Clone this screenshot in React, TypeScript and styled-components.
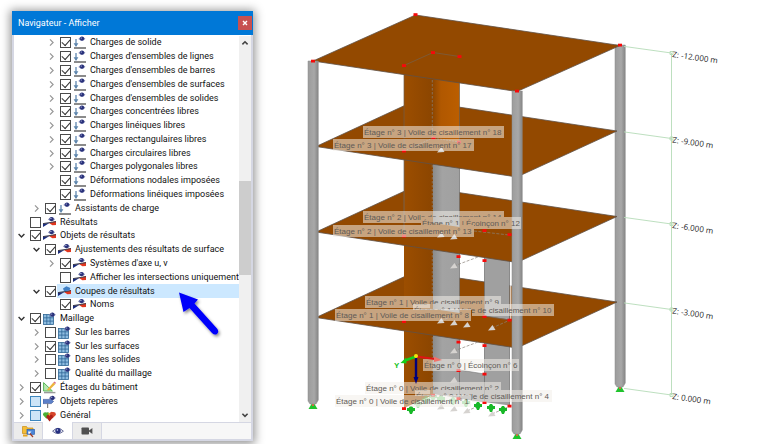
import React from "react";
import styled, { createGlobalStyle } from "styled-components";

const GlobalStyle = createGlobalStyle`
  * { box-sizing: border-box; }
  body { margin: 0; background: #fff; color: #111; font-family: Roboto, "Open Sans", sans-serif; }
  button { font: inherit; padding: 0; border: 0; background: none; color: inherit; }
`;

const Page = styled.div`
  position: relative;
  display: flex;
  align-items: flex-start;
  min-height: 100vh;
`;

const Panel = styled.aside`
  display: flex;
  flex-direction: column;
  flex: 0 0 241px;
  width: 241px;
  min-width: 0;
  min-height: calc(100vh - 14px);
  margin: 11px 7px 3px 12px;
  background: #fff;
  border: solid #d5d7e3;
  border-width: 0 2px 2px;
  box-shadow: 0 1px 9px 2px rgba(0, 0, 0, 0.42);
`;

const TitleBar = styled.header`
  display: flex;
  align-items: center;
  justify-content: space-between;
  height: 24px;
  margin: 0 -2px;
  padding: 0 1px 0 6px;
  background: #0078d7;
  color: #fff;
`;

const Title = styled.h1`
  margin: 0;
  font-size: 9px;
  font-weight: 400;
  line-height: 14px;
`;

const CloseButton = styled.button`
  width: 14px;
  height: 14px;
  background: #c75050;
  display: grid;
  place-items: center;
`;

const Body = styled.div`
  display: flex;
  flex: 1;
  padding-top: 1px;
`;

const Tree = styled.ul`
  flex: 1;
  min-width: 0;
  display: grid;
  grid-template-columns: minmax(0, 1fr);
  grid-auto-rows: 1fr;
  margin: 0;
  padding: 0;
  list-style: none;
  overflow: hidden;
`;

const Row = styled.li<{ $level: number }>`
  display: flex;
  align-items: center;
  padding-left: ${(p) => 1 + p.$level * 15}px;
  min-height: 13px;
`;

const Expander = styled.button`
  width: 12px;
  height: 12px;
  margin-right: 3px;
  display: grid;
  place-items: center;
`;

const ExpanderGap = styled.span`
  width: 15px;
`;

const Check = styled.input<{ $partial?: boolean }>`
  appearance: none;
  flex: none;
  position: relative;
  width: 11px;
  height: 11px;
  margin: 0 1px 0 0;
  border: 1px solid ${(p) => (p.$partial ? "#3d86bd" : "#4a4a4a")};
  background: ${(p) => (p.$partial ? "#cce4f7" : "#fff")};

  &:checked::after {
    content: "";
    position: absolute;
    left: 1px;
    top: 1px;
    width: 7px;
    height: 4px;
    border: solid #333;
    border-width: 0 0 1px 1px;
    transform: rotate(-48deg);
  }
`;

const ItemLabel = styled.label<{ $selected?: boolean }>`
  display: flex;
  align-items: center;
  flex: 1;
  align-self: stretch;
  gap: 4px;
  padding-left: 1px;
  min-width: 0;
  font-size: 9px;
  line-height: 13px;
  white-space: nowrap;
  background: ${(p) => (p.$selected ? "#cce8ff" : "transparent")};
`;

const Icon = styled.svg`
  flex: none;
  display: block;
`;

const ScrollBar = styled.div`
  flex: 0 0 12px;
  display: grid;
  grid-template-rows: 14px 131fr 95fr 133fr 14px;
  background: #f0f0f0;
`;

const ScrollButton = styled.button`
  display: grid;
  place-items: center;
`;

const Thumb = styled.div`
  grid-row: 3;
  background: #cdcdcd;
`;

const ScrollEnd = styled(ScrollButton)`
  grid-row: 5;
`;

const Tabs = styled.nav`
  display: flex;
  height: 17px;
  background: #f7f7f7;
  border-top: 1px solid #d5d7e3;
`;

const Tab = styled.button<{ $active?: boolean }>`
  width: ${(p) => (p.$active ? "30px" : "29px")};
  margin-top: ${(p) => (p.$active ? "-1px" : "0")};
  border-right: 1px solid #d5d7e3;
  background: ${(p) => (p.$active ? "#fff" : "#ececec")};
  display: grid;
  place-items: center;
`;

const Pointer = styled.svg`
  position: absolute;
  left: 172px;
  top: 286px;
  pointer-events: none;
`;

const Viewport = styled.main`
  flex: 1;
  min-width: 0;
`;

const Scene = styled.svg`
  display: block;
  width: 100%;
  height: auto;
`;

const Tag = styled.text`
  font-family: "Liberation Sans", sans-serif;
  font-size: 8px;
  fill: #5e5a56;
`;

const AxisName = styled(Tag)`
  font-weight: 700;
  fill: #18c41f;
`;

const Level = styled.text`
  font-family: "Open Sans", sans-serif;
  font-size: 8px;
  fill: #222;
`;

type IconName = "load" | "result" | "mesh" | "storey" | "sign" | "general" | "section";

interface Item {
  text: string;
  level: number;
  icon: IconName;
  checked?: boolean;
  partial?: boolean;
  open?: boolean;
  leaf?: boolean;
  selected?: boolean;
}

const items: Item[] = [
  { text: "Charges de solide", level: 2, icon: "load", checked: true },
  { text: "Charges d'ensembles de lignes", level: 2, icon: "load", checked: true },
  { text: "Charges d'ensembles de barres", level: 2, icon: "load", checked: true },
  { text: "Charges d'ensembles de surfaces", level: 2, icon: "load", checked: true },
  { text: "Charges d'ensembles de solides", level: 2, icon: "load", checked: true },
  { text: "Charges concentrées libres", level: 2, icon: "load", checked: true },
  { text: "Charges linéiques libres", level: 2, icon: "load", checked: true },
  { text: "Charges rectangulaires libres", level: 2, icon: "load", checked: true },
  { text: "Charges circulaires libres", level: 2, icon: "load", checked: true },
  { text: "Charges polygonales libres", level: 2, icon: "load", checked: true },
  { text: "Déformations nodales imposées", level: 2, icon: "load", checked: true, leaf: true },
  { text: "Déformations linéiques imposées", level: 2, icon: "load", checked: true, leaf: true },
  { text: "Assistants de charge", level: 1, icon: "load", checked: true },
  { text: "Résultats", level: 0, icon: "result", leaf: true },
  { text: "Objets de résultats", level: 0, icon: "result", checked: true, open: true },
  { text: "Ajustements des résultats de surface", level: 1, icon: "result", checked: true, open: true },
  { text: "Systèmes d'axe u, v", level: 2, icon: "result", checked: true },
  { text: "Afficher les intersections uniquement", level: 2, icon: "result", leaf: true },
  { text: "Coupes de résultats", level: 1, icon: "section", checked: true, open: true, selected: true },
  { text: "Noms", level: 2, icon: "result", checked: true, leaf: true },
  { text: "Maillage", level: 0, icon: "mesh", checked: true, open: true },
  { text: "Sur les barres", level: 1, icon: "mesh" },
  { text: "Sur les surfaces", level: 1, icon: "mesh", checked: true },
  { text: "Dans les solides", level: 1, icon: "mesh" },
  { text: "Qualité du maillage", level: 1, icon: "mesh" },
  { text: "Étages du bâtiment", level: 0, icon: "storey", checked: true },
  { text: "Objets repères", level: 0, icon: "sign", partial: true },
  { text: "Général", level: 0, icon: "general", partial: true },
];

const Eye = ({ x = 0, y = 0 }: { x?: number; y?: number }) => (
  <g transform={`translate(${x} ${y})`}>
    <path d="M0 3Q3.3 -1.2 7 2.8Q3.6 6.6 0 3Z" fill="#8087b5" />
    <circle cx="3.6" cy="2.7" r="2.1" fill="#28307a" />
    <circle cx="2.9" cy="2" r=".6" fill="#c9cfec" />
  </g>
);

const ItemIcon = ({ name }: { name: IconName }) => {
  switch (name) {
    case "load":
      return (
        <>
          <path d="M3 3V10" stroke="#7f9fc0" strokeWidth="1.6" />
          <path d="M.6 7.2H5.4L3 11Z" fill="#5f86ad" />
          <path d="M1 12H13" stroke="#3d3d3d" strokeWidth="1.2" />
          <Eye x={5.4} y={0} />
        </>
      );
    case "result":
    case "section":
      return (
        <>
          <path d="M0 11V7.4L6.4 7Z" fill="#1b2c7c" />
          <path d="M6 7L13 5V9L9.4 9.2Z" fill="#e0361f" />
          <path d="M0 7.6L13 5.6" stroke="#3d3d4a" />
          {name === "section" ? (
            <path d="M5 3.4L8.4 1.2L12.4 3L11.4 5.4L6 6.2Z" fill="#3f7fc4" />
          ) : (
            <Eye x={5} y={0.4} />
          )}
        </>
      );
    case "mesh":
      return (
        <>
          <rect x=".5" y="2.5" width="10" height="10" fill="#8fbde0" stroke="#2f6594" strokeWidth=".8" />
          <path d="M3.8 2.5V12.5M7.1 2.5V12.5M.5 5.8H10.5M.5 9.1H10.5" stroke="#2d6596" strokeWidth=".8" />
          <Eye x={5.8} y={0} />
        </>
      );
    case "storey":
      return (
        <>
          <path d="M.6 1.6V10H9.4Z" fill="#b9e8b0" stroke="#58b858" />
          <path d="M3.8 9L10.4 1.4L12.4 3L6 9.6Z" fill="#edb43c" />
          <path d="M10.4 1.4L11.4 .4L13 1.8L12.2 3Z" fill="#d87084" />
          <path d="M1 11.6H12.4" stroke="#9a9a9a" strokeWidth="1.4" />
        </>
      );
    case "sign":
      return (
        <>
          <path d="M0 4.4H8.4L10.6 6.4L8.4 8.6H0Z" fill="#5c80c8" stroke="#3b5697" strokeWidth=".6" />
          <path d="M4.6 8.6V13" stroke="#7d7d7d" strokeWidth="1.2" />
          <Eye x={5.8} y={0.2} />
        </>
      );
    default:
      return (
        <>
          <path d="M3.4 9.8L0 6Q-.2 2.6 3.4 3.4Q7 2.6 6.6 6.2Z" fill="#4aaf35" />
          <path d="M9.4 9.6L6.6 5.6Q7 1.8 9.6 3Q13.4 2.6 12.8 6Z" fill="#d6452b" />
          <path d="M6.6 12.4L3.2 8.2Q4 4.6 6.6 6.2Q9.8 4.6 10 8.2Z" fill="#b02118" />
          <path d="M5 4Q6.6 3 7.4 5L6.2 7Z" fill="#e8a02a" />
        </>
      );
  }
};

const Chevron = ({ open }: { open?: boolean }) => (
  <Icon width="9" height="9" viewBox="0 0 9 9" fill="none">
    {open ? (
      <path d="M1.6 3L4.5 5.9L7.4 3" stroke="#333" strokeWidth="1.4" />
    ) : (
      <path d="M3 1.4L6.1 4.5L3 7.6" stroke="#979797" strokeWidth="1.2" />
    )}
  </Icon>
);

const TreeItem = ({ item, id }: { item: Item; id: string }) => (
  <Row $level={item.level}>
    {item.leaf ? (
      <ExpanderGap />
    ) : (
      <Expander aria-label={item.text} aria-expanded={!!item.open}>
        <Chevron open={item.open} />
      </Expander>
    )}
    <Check type="checkbox" id={id} defaultChecked={item.checked} $partial={item.partial} />
    <ItemLabel htmlFor={id} $selected={item.selected}>
      <Icon width="13" height="13" viewBox="0 0 13 13">
        <ItemIcon name={item.icon} />
      </Icon>
      {item.text}
    </ItemLabel>
  </Row>
);

const Slab = ({ dy, inset = 0 }: { dy: number; inset?: number }) => (
  <polygon
    points={`415.5,${15 + dy} ${620 - inset},${45.5 + dy} 517,${91.5 + dy} ${313 + inset},${61 + dy}`}
    fill="#934900"
    stroke="#5f5247"
    strokeWidth=".8"
  />
);

const Column = ({ x, top, bottom }: { x: number; top: number; bottom: number }) => (
  <g>
    <path d={`M${x - 1.5} ${bottom}h3l3 5h-9z`} fill="#1fc32c" />
    <path d={`M${x - 1} ${bottom - 1}h2v3h-2z`} fill="#d2693e" />
    <path
      d={`M${x - 5} ${top}H${x + 5.3}V${bottom - 4}L${x + 3} ${bottom}H${x - 3}L${x - 5} ${bottom - 3}Z`}
      fill="url(#steel)"
      stroke="#8b8b8b"
      strokeWidth=".5"
    />
  </g>
);

const RedNodes = ({ points }: { points: number[][] }) => (
  <>
    {points.map(([x, y]) => (
      <rect key={`${x}-${y}`} x={x - 2} y={y - 1.3} width="4" height="2.8" fill="#f50a0a" />
    ))}
  </>
);

interface TagData {
  text: string;
  x: number;
  y: number;
  width: number;
  clip?: string;
}

const tags: TagData[] = [
  { text: "Étage n° 3 | Voile de cisaillement n° 18", x: 363, y: 126, width: 141 },
  { text: "Étage n° 3 | Voile de cisaillement n° 17", x: 333, y: 139, width: 141 },
  { text: "Étage n° 2 | Voile de cisaillement n° 14", x: 363, y: 211, width: 141, clip: "M350 200H520V217H421V225H350Z" },
  { text: "Étage n° 1 | Écoinçon n° 12", x: 421, y: 217, width: 100, clip: "M415 210H530V230H474V225H415Z" },
  { text: "Étage n° 2 | Voile de cisaillement n° 13", x: 333, y: 225, width: 141 },
  { text: "Étage n° 1 | Voile de cisaillement n° 9", x: 365, y: 296, width: 136, clip: "M350 280H520V304H430V309H350Z" },
  { text: "Étage n° 1 | Voile de cisaillement n° 10", x: 413, y: 304, width: 141, clip: "M405 300H570V320H472V310H405Z" },
  { text: "Étage n° 1 | Voile de cisaillement n° 8", x: 335, y: 309, width: 136 },
  { text: "Étage n° 0 | Écoinçon n° 6", x: 423, y: 359, width: 96 },
  { text: "Étage n° 0 | Voile de cisaillement n° 2", x: 365, y: 382, width: 136, clip: "M350 375H520V390H430V395H350Z" },
  { text: "Étage n° 0 | Voile de cisaillement n° 4", x: 415, y: 390, width: 137, clip: "M405 385H570V405H472V396H405Z" },
  { text: "Étage n° 0 | Voile de cisaillement n° 1", x: 335, y: 395, width: 136 },
];

const levels = [
  { text: "Z: -12.000 m", y: 53 },
  { text: "Z: -9.000 m", y: 138.5 },
  { text: "Z: -6.000 m", y: 224 },
  { text: "Z: -3.000 m", y: 309.5 },
  { text: "Z: 0.000 m", y: 395 },
];

const markers = [
  [441, 150], [441, 235], [454, 237], [454, 266], [441, 321], [454, 323], [467, 325],
  [492, 328], [454, 351], [454, 380], [441, 407], [454, 409], [467, 411], [492, 414],
];

const supports = [
  [411, 410, 1], [418, 404, 0.35], [426, 400, 0.45], [433, 397, 0.4], [441, 399, 0.45], [453, 401, 0.4],
  [466, 403, 0.45], [478, 406, 1], [491, 408, 1], [503, 410, 1],
];

const Building = () => (
  <Scene viewBox="260 0 500 444" role="img" aria-label="Structure">
    <defs>
      <linearGradient id="steel">
        <stop offset="0" stopColor="#9c9c9c" />
        <stop offset=".6" stopColor="#a8a8a8" />
        <stop offset="1" stopColor="#858585" />
      </linearGradient>
      <linearGradient id="concrete">
        <stop offset="0" stopColor="#8b8b8b" />
        <stop offset=".35" stopColor="#a3a3a3" />
        <stop offset="1" stopColor="#a0a0a0" />
      </linearGradient>
      <linearGradient id="shaft">
        <stop offset="0" stopColor="#8f4700" />
        <stop offset=".3" stopColor="#b15800" />
        <stop offset="1" stopColor="#bb5e00" />
      </linearGradient>
      <linearGradient id="side">
        <stop offset="0" stopColor="#9c4e00" />
        <stop offset="1" stopColor="#8b4500" />
      </linearGradient>
    </defs>

    <Column x={620} top={45} bottom={387} />

    <polygon points="404,320 433,315 433,395 404,408" fill="url(#side)" />
    <polygon points="433,315 459.5,315 459.5,398 433,394" fill="url(#concrete)" />
    <polygon points="484.5,335 509.5,335 509.5,405.5 484.5,402" fill="#a0a0a0" />
    <polygon points="459.5,370 484.5,374 484.5,402 459.5,398" fill="#a0a0a0" stroke="#777" strokeWidth=".6" />
    <path d="M459.5 335V398M484.5 340V402M509.5 335V406" stroke="#6c6c6c" strokeWidth=".7" />
    <Slab dy={256.5} inset={3} />

    <polygon points="404,225 433,225 433,309 404,321" fill="url(#side)" />
    <polygon points="433,240 459.5,240 459.5,313 433,309" fill="url(#concrete)" />
    <polygon points="484.5,250 509.5,250 509.5,319.5 484.5,316" fill="#a0a0a0" />
    <path d="M459.5 250V313M484.5 255V316M509.5 255V320M484.5 316L509.5 320" stroke="#6c6c6c" strokeWidth=".7" />
    <path d="M510.8 258V319" stroke="#fff" />
    <Slab dy={171} inset={3} />

    <polygon points="404,150 433,150 433,223 404,236" fill="url(#side)" />
    <polygon points="433,150 459.5,150 459.5,227 433,223" fill="url(#concrete)" />
    <path d="M404 150V236M459.5 155V227" stroke="#6c6c6c" strokeWidth=".7" />
    <Slab dy={85.5} inset={3} />

    <polygon points="404,65 433,65 433,138 404,151" fill="url(#side)" />
    <polygon points="433,65 459.5,65 459.5,142 433,138" fill="url(#shaft)" />
    <path d="M404 65V151M459.5 70V142" stroke="#6d5d4c" strokeWidth=".7" />
    <Slab dy={0} />

    <g fill="none" stroke="#8a8178" strokeWidth=".7">
      <path d="M404 65.5L433 52.5L459.5 56.5" stroke="#74604c" />
      <path d="M432.3 80V138M432.3 165V210M432.3 251V294M432.3 337V382" strokeDasharray="2.5 1.5" />
      <path d="M454 266L478 257M454 351L478 342M492 328L510 320M492 414L508 407M467 411L483 404M441 321L454 315M474 231L509 235" strokeDasharray="3 1.5" />
      <path d="M404 151L433 138L459.5 142" strokeDasharray="2 1" />
    </g>

    <Column x={313} top={61} bottom={404} />
    <Column x={517} top={91} bottom={434} />

    {markers.map(([x, y]) => (
      <path key={`${x}-${y}`} d={`M${x - 4} ${y + 2.5}L${x + 0.5} ${y - 3}L${x + 3.5} ${y + 2}Z`} fill="#d6d3d0" />
    ))}
    {supports.map(([x, y, o]) => (
      <path
        key={`${x}-${y}`}
        d={`M${x - 1} ${y - 4}h2l1.3 2h1.7v3h-1.7l-1.3 3h-2l-1.3 -3h-1.7v-3h1.7z`}
        fill="#18b828"
        opacity={o}
      />
    ))}

    <RedNodes
      points={[
        [313, 61], [415.5, 14.5], [620, 45], [517, 91], [404, 65.5], [433, 52.5], [459.5, 56.5],
        [404, 151], [433.5, 138], [459, 142], [404, 236], [484.5, 230.5], [509.5, 234.5],
        [458.5, 256.5], [484.5, 260.5], [404, 321.5], [484.5, 316.5], [509.5, 320],
        [458.5, 342], [484.5, 345.5], [458.5, 370.5], [484.5, 374], [404, 408.5],
        [433, 395], [458.5, 398.5], [484.5, 402.5], [509.5, 406],
      ]}
    />

    {tags.map((tag, i) => (
      <g key={tag.text}>
        {tag.clip && (
          <clipPath id={`tag-${i}`}>
            <path d={tag.clip} />
          </clipPath>
        )}
        <g clipPath={tag.clip ? `url(#tag-${i})` : undefined}>
          <rect x={tag.x} y={tag.y} width={tag.width} height="12" fill="#f3efea" opacity=".55" />
          <Tag x={tag.x + 1} y={tag.y + 9}>{tag.text}</Tag>
        </g>
      </g>
    ))}

    <path d="M416 357V378" stroke="#00007c" strokeWidth="2.4" />
    <path d="M413.5 377H418.5L416 384Z" fill="#00007c" />
    <path d="M416 356.5L435 359" stroke="#e01414" strokeWidth="2.2" />
    <path d="M434 356.5L442 360L434 362Z" fill="#f07068" />
    <path d="M416 356.5L405 360.5" stroke="#14cf1b" strokeWidth="2.4" />
    <path d="M406 357.5L400.5 363L406.5 363.5Z" fill="#14cf1b" />
    <circle cx="416" cy="356" r="2" fill="#f4e60b" />
    <AxisName x="394" y="368">Y</AxisName>

    <g stroke="#b5dbb8" strokeWidth=".9" fill="none">
      <path d="M671.5 53V395" />
      {levels.map((l) => (
        <path key={l.text} d={`M624 ${l.y - 6.6}L671.5 ${l.y}M670 ${l.y - 1.5}h3v3h-3z`} />
      ))}
    </g>
    {levels.map((l) => (
      <Level key={l.text} x="672" y={l.y + 4} transform={`rotate(8 672 ${l.y + 4})`}>
        {l.text}
      </Level>
    ))}
  </Scene>
);

const App = () => (
  <>
    <GlobalStyle />
    <Page>
      <Panel>
        <TitleBar>
          <Title>Navigateur - Afficher</Title>
          <CloseButton aria-label="Fermer">
            <Icon width="6" height="6" viewBox="0 0 6 6">
              <path d="M1 1L5 5M5 1L1 5" stroke="#fff" strokeWidth="1.4" />
            </Icon>
          </CloseButton>
        </TitleBar>
        <Body>
          <Tree>
            {items.map((item, i) => (
              <TreeItem key={item.text} item={item} id={`item-${i}`} />
            ))}
          </Tree>
          <ScrollBar>
            <ScrollButton aria-label="Défiler vers le haut">
              <Icon width="8" height="8" viewBox="0 0 8 8" fill="none">
                <path d="M1.4 5.4L4 2.8L6.6 5.4" stroke="#444" strokeWidth="1.6" />
              </Icon>
            </ScrollButton>
            <Thumb />
            <ScrollEnd aria-label="Défiler vers le bas">
              <Icon width="8" height="8" viewBox="0 0 8 8" fill="none">
                <path d="M1.4 2.8L4 5.4L6.6 2.8" stroke="#444" strokeWidth="1.6" />
              </Icon>
            </ScrollEnd>
          </ScrollBar>
        </Body>
        <Tabs>
          <Tab aria-label="Données">
            <Icon width="13" height="13" viewBox="0 0 13 13">
              <path d="M.5 1.5H4.5L5.5 3H11V8.5H.5Z" fill="#f5bd35" stroke="#c98d13" strokeWidth=".7" />
              <rect x="5" y="4.5" width="7.4" height="4.8" fill="#4b86d8" stroke="#2a5fae" strokeWidth=".7" />
              <path d="M1 9.5H5.5V11.5H1Z" fill="#e6a41d" />
              <path d="M7 7.5L11 12" stroke="#a03d28" strokeWidth="1.2" />
              <path d="M6 6.5H9.5L6.8 9.6Z" fill="#fff" />
            </Icon>
          </Tab>
          <Tab $active aria-label="Afficher">
            <Icon width="12" height="10" viewBox="0 0 12 10">
              <path d="M.6 5.2Q6 -.6 11.4 5.2Q6 10 .6 5.2Z" fill="#e9ebf5" stroke="#5b618d" strokeWidth=".9" />
              <circle cx="6" cy="4.8" r="2.7" fill="#252f80" />
              <circle cx="5.4" cy="4" r=".8" fill="#d5daf3" />
            </Icon>
          </Tab>
          <Tab aria-label="Vues">
            <Icon width="12" height="10" viewBox="0 0 12 10">
              <rect x=".5" y="1.5" width="7.5" height="7" rx=".8" fill="#505050" />
              <path d="M8 4.6L11.4 2V8L8 5.6Z" fill="#505050" />
            </Icon>
          </Tab>
        </Tabs>
      </Panel>
      <Viewport>
        <Building />
      </Viewport>
      <Pointer width="56" height="60" viewBox="172 286 56 60">
        <defs>
          <filter id="soft" x="-20%" y="-20%" width="150%" height="150%">
            <feDropShadow dx="1.5" dy="2" stdDeviation="1.5" floodOpacity=".45" />
          </filter>
        </defs>
        <path
          d="M179 292.5L198 299.5L194.5 303.5L217 328.5Q219.5 331.5 217 334Q214.5 335.5 212 333L189.5 308L183.5 312Z"
          fill="#0000fa"
          filter="url(#soft)"
        />
      </Pointer>
    </Page>
  </>
);

export default App;
